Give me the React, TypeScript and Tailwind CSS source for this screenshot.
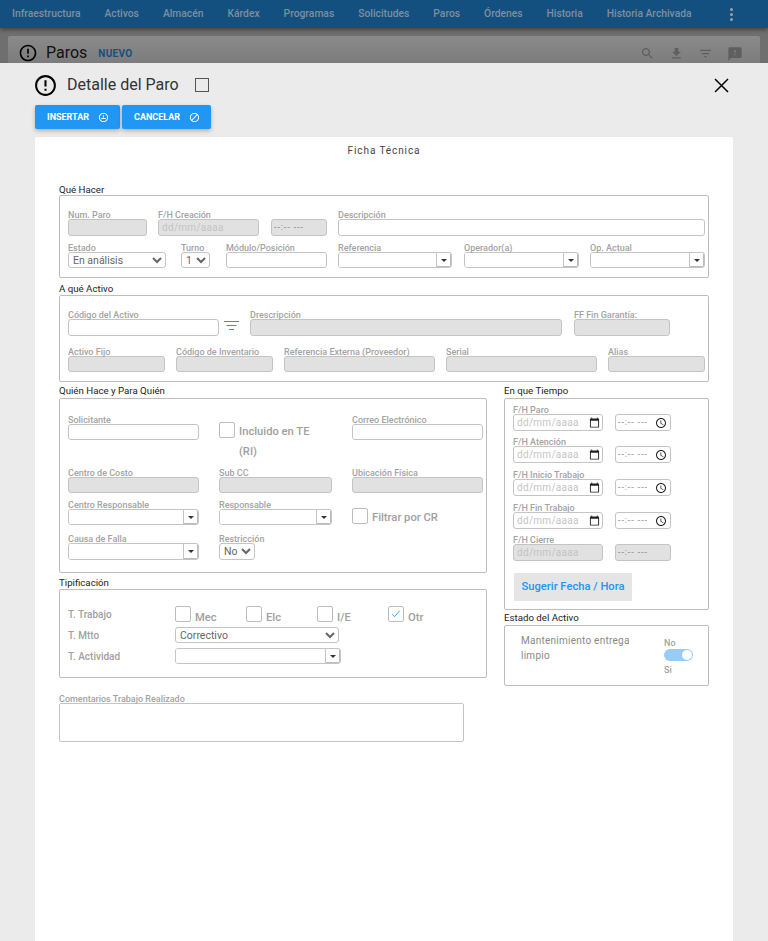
import type { ReactNode } from 'react';

const menu = ['Infraestructura', 'Activos', 'Almacén', 'Kárdex', 'Programas', 'Solicitudes', 'Paros', 'Órdenes', 'Historia', 'Historia Archivada'];

const ICONS = {
  error: 'M11 15h2v2h-2zm0-8h2v6h-2zm.99-5C6.47 2 2 6.48 2 12s4.47 10 9.99 10C17.52 22 22 17.52 22 12S17.52 2 11.99 2zM12 20c-4.42 0-8-3.58-8-8s3.58-8 8-8 8 3.58 8 8-3.58 8-8 8z',
  search: 'M15.5 14h-.79l-.28-.27C15.41 12.59 16 11.11 16 9.5 16 5.91 13.09 3 9.5 3S3 5.91 3 9.5 5.91 16 9.5 16c1.61 0 3.09-.59 4.23-1.57l.27.28v.79l5 4.99L20.49 19l-4.99-5zm-6 0C7.01 14 5 11.99 5 9.5S7.01 5 9.5 5 14 7.01 14 9.5 11.99 14 9.5 14z',
  download: 'M19 9h-4V3H9v6H5l7 7 7-7zM5 18v2h14v-2H5z',
  filter: 'M10 18h4v-2h-4v2zM3 6v2h18V6H3zm3 7h12v-2H6v2z',
  feedback: 'M20 2H4c-1.1 0-1.99.9-1.99 2L2 22l4-4h14c1.1 0 2-.9 2-2V4c0-1.1-.9-2-2-2zm-7 12h-2v-2h2v2zm0-4h-2V6h2v4z',
  block: 'M12 2C6.48 2 2 6.48 2 12s4.48 10 10 10 10-4.48 10-10S17.52 2 12 2zM4 12c0-4.42 3.58-8 8-8 1.85 0 3.55.63 4.9 1.69L5.69 16.9C4.63 15.55 4 13.85 4 12zm8 8c-1.85 0-3.55-.63-4.9-1.69L18.31 7.1C19.37 8.45 20 10.15 20 12c0 4.42-3.58 8-8 8z',
  insert: 'M12 2C6.48 2 2 6.48 2 12s4.48 10 10 10 10-4.48 10-10S17.52 2 12 2zm0 18c-4.42 0-8-3.58-8-8s3.58-8 8-8 8 3.58 8 8-3.58 8-8 8zM7 13h10v2H7zm4-6h2v5h-2z',
  clock: 'M11.99 2C6.47 2 2 6.48 2 12s4.47 10 9.99 10C17.52 22 22 17.52 22 12S17.52 2 11.99 2zM12 20c-4.42 0-8-3.58-8-8s3.58-8 8-8 8 3.58 8 8-3.58 8-8 8zm.5-13H11v6l5.25 3.15.75-1.23-4.5-2.67z',
  calendar: 'M20 3h-1V1h-2v2H7V1H5v2H4c-1.1 0-2 .9-2 2v16c0 1.1.9 2 2 2h16c1.1 0 2-.9 2-2V5c0-1.1-.9-2-2-2zm0 18H4V8h16v13z',
};

const Icon = ({ name, className }: { name: keyof typeof ICONS; className: string }) => (
  <svg viewBox="0 0 24 24" fill="currentColor" className={className}>
    <path d={ICONS[name]} />
  </svg>
);

const Label = ({ children, className = 'h-[9px]' }: { children: ReactNode; className?: string }) => (
  <div className={`${className} flex items-end whitespace-nowrap text-[9px] leading-[7px] font-medium text-[#a3a3a3]`}>{children}</div>
);

const inputBox = 'block w-full rounded-[3px] border border-[#c4c4c4] text-[#666]';

const Text = ({ label, className, off, h = 'h-[17px]', labelClass }: { label: string; className: string; off?: boolean; h?: string; labelClass?: string }) => (
  <div className={className}>
    <Label className={labelClass}>{label}</Label>
    <input disabled={off} className={`${inputBox} ${h} px-1 text-[11px] ${off ? 'bg-[#e1e1e1]' : 'bg-white'}`} />
  </div>
);

const Combo = ({ label, className, h = 'h-[17px]', labelClass }: { label?: string; className: string; h?: string; labelClass?: string }) => (
  <div className={className}>
    {label && <Label className={labelClass}>{label}</Label>}
    <div className={`flex overflow-hidden rounded-[3px] border border-[#c4c4c4] bg-white ${h}`}>
      <input className="min-w-0 flex-1 bg-white px-1 text-[11px]" />
      <span className="flex w-[15px] items-center justify-center border-l border-[#c4c4c4] shadow-[inset_-1px_-1px_0_#bbb]">
        <span className="h-0 w-0 border-x-[3px] border-t-[3px] border-x-transparent border-t-[#333]" />
      </span>
    </div>
  </div>
);

const Pick = ({ label, className, value, h = 'h-[17px]', labelClass }: { label?: string; className: string; value: string; h?: string; labelClass?: string }) => (
  <div className={className}>
    {label && <Label className={labelClass}>{label}</Label>}
    <select defaultValue={value} className={`${inputBox} ${h} bg-white text-[10.5px]`}>
      <option>{value}</option>
    </select>
  </div>
);

const Check = ({ checked, className = 'h-4 w-4' }: { checked?: boolean; className?: string }) => (
  <span className={`flex shrink-0 items-center justify-center rounded-[2px] border border-[#bdbdbd] bg-white ${className}`}>
    {checked && (
      <svg viewBox="0 0 16 16" className="h-3 w-3" fill="none" stroke="#2196f3" strokeWidth="1.2">
        <path d="M3 8.5l3.2 3L13 3.5" />
      </svg>
    )}
  </span>
);

const Section = ({ title, head, className, children }: { title: string; head: string; className: string; children: ReactNode }) => (
  <section>
    <div className={`${head} text-[9.7px] leading-[12px] text-[#222]`}>{title}</div>
    <div className={`rounded-[2px] border border-[#bdbdbd] ${className}`}>{children}</div>
  </section>
);

const DateText = () => <span className="text-[10px] tracking-[0.3px] text-[#c4c4c4]">dd/mm/aaaa</span>;
const TimeText = () => <span className="text-[9px] tracking-[0.9px] text-[#888]">--:-- ---</span>;

const DateTime = ({ label, rowClass, off }: { label: string; rowClass: string; off?: boolean }) => (
  <div className={rowClass}>
    <Label>{label}</Label>
    <div className="flex gap-3">
      <div className={`flex h-[17px] w-[90px] items-center justify-between rounded-[3px] border border-[#c4c4c4] pl-[3px] pr-[2px] ${off ? 'bg-[#e1e1e1]' : 'bg-white'}`}>
        <DateText />
        {!off && <Icon name="calendar" className="h-[11px] w-[11px] text-[#222]" />}
      </div>
      <div className={`flex h-[17px] w-[56px] items-center justify-between rounded-[3px] border border-[#c4c4c4] pl-[2px] pr-[3px] ${off ? 'bg-[#e1e1e1]' : 'bg-white'}`}>
        <TimeText />
        {!off && <Icon name="clock" className="h-[12px] w-[12px] text-[#222]" />}
      </div>
    </div>
  </div>
);

const checkText = 'text-[11.2px] font-medium text-[#a0a0a0]';

const Opt = ({ label, checked }: { label: string; checked?: boolean }) => (
  <div className="flex w-[71px] items-center gap-1">
    <Check checked={checked} />
    <span className={`pt-[7px] leading-[13px] ${checkText}`}>{label}</span>
  </div>
);

const SideLabel = ({ children }: { children: ReactNode }) => (
  <span className="w-[107px] shrink-0 text-[10px] font-medium text-[#a0a0a0]">{children}</span>
);

export default function App() {
  return (
    <div className="flex h-screen flex-col overflow-hidden font-[Roboto,sans-serif]">
      {/* dimmed page behind the dialog */}
      <div className="h-[63px] shrink-0 overflow-hidden bg-[#6f6f6f]">
        <nav className="flex h-[28px] items-center justify-between bg-[#14507f] pl-3 pr-[35px] shadow-[0_2px_4px_rgba(0,0,0,0.4)]">
          <div className="flex gap-6">
            {menu.map((m) => (
              <span key={m} className="text-[10.3px] font-medium whitespace-nowrap text-[#7d8f9e]">{m}</span>
            ))}
          </div>
          <div className="flex flex-col gap-[2px]">
            <span className="h-[3px] w-[3px] rounded-full bg-[#a0a0a0]" />
            <span className="h-[3px] w-[3px] rounded-full bg-[#a0a0a0]" />
            <span className="h-[3px] w-[3px] rounded-full bg-[#a0a0a0]" />
          </div>
        </nav>
        <div className="mx-2 mt-2 flex h-[40px] items-start rounded-t-[2px] bg-gradient-to-b from-[#8a8a8a] to-[#767676] pl-[10px] pr-[17px] pt-[7px]">
          <Icon name="error" className="h-[20px] w-[20px] text-black" />
          <span className="ml-2 pt-[1px] text-[16px] leading-[18px] text-[#111]">Paros</span>
          <span className="ml-[11px] pt-[5px] text-[10px] leading-[12px] font-bold tracking-[0.3px] text-[#14507f]">NUEVO</span>
          <div className="ml-auto flex gap-[14px] pt-[3px] text-[#5f5f5f]">
            <Icon name="search" className="h-[15px] w-[15px]" />
            <Icon name="download" className="h-[15px] w-[15px]" />
            <Icon name="filter" className="h-[15px] w-[15px]" />
            <Icon name="feedback" className="h-[16px] w-[16px]" />
          </div>
        </div>
      </div>

      {/* dialog */}
      <div className="flex min-h-0 flex-1 flex-col bg-[#ebebeb] px-[35px]">
        <div className="flex h-[42px] items-center pt-[2px]">
          <Icon name="error" className="ml-[-2px] h-[25px] w-[25px] text-black" />
          <span className="ml-[9px] text-[16px] text-[#333]">Detalle del Paro</span>
          <span className="ml-4 h-[14px] w-[14px] border border-[#555]" />
          <svg viewBox="0 0 15 15" className="ml-auto mr-1 h-[15px] w-[15px]" fill="none" stroke="#000" strokeWidth="1.5">
            <path d="M1 1l13 13M14 1L1 14" />
          </svg>
        </div>
        <div className="flex gap-[2px]">
          <button className="flex h-[24px] w-[85px] items-center justify-between rounded-[2px] bg-[#2196f3] pl-3 pr-[11px] pt-[1px] text-[9px] font-bold text-white shadow-[0_2px_4px_rgba(0,0,0,0.25)]">
            INSERTAR
            <Icon name="insert" className="h-[11px] w-[11px]" />
          </button>
          <button className="flex h-[24px] w-[89px] items-center justify-between rounded-[2px] bg-[#2196f3] pl-3 pr-[11px] pt-[1px] text-[9px] font-bold text-white shadow-[0_2px_4px_rgba(0,0,0,0.25)]">
            CANCELAR
            <Icon name="block" className="h-[11px] w-[11px]" />
          </button>
        </div>

        <div className="mt-2 flex-1 rounded-t-[2px] bg-white pl-[24px] pr-[24px] pt-[7px]">
          <h2 className="h-[14px] text-center text-[10px] leading-[14px] font-normal tracking-[0.9px] text-[#444]">Ficha Técnica</h2>

          <div className="mt-5">
            <Section title="Qué Hacer" head="h-[17px] pt-[6px]" className="h-[83px] pl-2 pr-[3px] pt-[14px]">
              <div className="flex">
                <Text label="Num. Paro" className="w-[79px]" off />
                <div className="ml-[11px] w-[101px]">
                  <Label>F/H Creación</Label>
                  <div className="flex h-[17px] items-center rounded-[3px] border border-[#c4c4c4] bg-[#e1e1e1] pl-[3px]">
                    <DateText />
                  </div>
                </div>
                <div className="ml-3 w-[56px]">
                  <Label>{'\u00a0'}</Label>
                  <div className="flex h-[17px] items-center rounded-[3px] border border-[#c4c4c4] bg-[#e1e1e1] pl-[2px]">
                    <TimeText />
                  </div>
                </div>
                <Text label="Descripción" className="ml-[11px] w-[367px]" />
              </div>
              <div className="mt-[7px] flex">
                <Pick label="Estado" value="En análisis" className="w-[98px]" h="h-4" />
                <Pick label="Turno" value="1" className="ml-[15px] w-[29px]" h="h-4" />
                <Text label="Módulo/Posición" className="ml-4 w-[101px]" h="h-4" />
                <Combo label="Referencia" className="ml-[11px] w-[114px]" h="h-4" />
                <Combo label="Operador(a)" className="ml-3 w-[115px]" h="h-4" />
                <Combo label="Op. Actual" className="ml-[11px] w-[115px]" h="h-4" />
              </div>
            </Section>

            <Section title="A qué Activo" head="h-[17px] pt-[5px]" className="h-[87px] pl-2 pr-[3px] pt-[14px]">
              <div className="flex">
                <Text label="Código del Activo" className="w-[151px]" />
                <div className="flex w-[31px] items-end pb-[5px] pl-[5px]">
                  <svg viewBox="0 0 15 10" className="h-[10px] w-[15px]" fill="none" stroke="#2196f3" strokeWidth="1">
                    <path d="M0 .5h15M2.5 4.5h10M5 8.5h5" />
                  </svg>
                </div>
                <Text label="Drescripción" className="w-[312px]" off />
                <Text label="FF Fin Garantía:" className="ml-3 w-[96px]" off />
              </div>
              <div className="mt-[11px] flex">
                <Text label="Activo Fijo" className="w-[97px]" off h="h-4" />
                <Text label="Código de Inventario" className="ml-[11px] w-[97px]" off h="h-4" />
                <Text label="Referencia Externa (Proveedor)" className="ml-[11px] w-[151px]" off h="h-4" />
                <Text label="Serial" className="ml-[11px] w-[151px]" off h="h-4" />
                <Text label="Alias" className="ml-[11px] w-[97px]" off h="h-4" />
              </div>
            </Section>
          </div>

          <div className="flex gap-[17px]">
            <div className="w-[428px]">
              <Section title="Quién Hace y Para Quién" head="h-4 pt-[3px]" className="h-[175px] pl-2 pt-[15px]">
                <div className="grid grid-cols-[131px_113px_131px] grid-rows-[53px_33px_34px_26px] gap-x-5">
                  <Text label="Solicitante" className="" labelClass="h-[10px]" h="h-4" />
                  <div className="flex gap-1 pt-2">
                    <Check />
                    <span className={`leading-[20px] ${checkText}`}>
                      Incluido en TE
                      <br />
                      (RI)
                    </span>
                  </div>
                  <Text label="Correo Electrónico" className="" labelClass="h-[10px]" h="h-4" />
                  <Text label="Centro de Costo" className="" labelClass="h-[10px]" h="h-4" off />
                  <Text label="Sub CC" className="" labelClass="h-[10px]" h="h-4" off />
                  <Text label="Ubicación Física" className="" labelClass="h-[10px]" h="h-4" off />
                  <Combo label="Centro Responsable" className="" h="h-4" />
                  <Combo label="Responsable" className="" h="h-4" />
                  <div className="flex gap-1 pt-2">
                    <Check />
                    <span className={`leading-[20px] ${checkText}`}>Filtrar por CR</span>
                  </div>
                  <Combo label="Causa de Falla" className="" />
                  <Pick label="Restricción" value="No" className="w-[36px]" />
                </div>
              </Section>

              <Section title="Tipificación" head="h-4 pt-[4px]" className="h-[89px] pl-2 pt-4">
                <div className="flex h-4 items-center">
                  <SideLabel>T. Trabajo</SideLabel>
                  <Opt label="Mec" />
                  <Opt label="Elc" />
                  <Opt label="I/E" />
                  <Opt label="Otr" checked />
                </div>
                <div className="mt-[5px] flex items-center">
                  <SideLabel>T. Mtto</SideLabel>
                  <Pick value="Correctivo" className="w-[164px]" h="h-4" />
                </div>
                <div className="mt-[5px] flex items-center">
                  <SideLabel>T. Actividad</SideLabel>
                  <Combo className="w-[166px]" h="h-4" />
                </div>
              </Section>

              <div className="mt-[15px] w-[405px]">
                <Label className="h-[10px]">Comentarios Trabajo Realizado</Label>
                <textarea className="block h-[39px] w-full resize-none rounded-[2px] border border-[#c4c4c4] bg-white" />
              </div>
            </div>

            <div className="w-[205px]">
              <Section title="En que Tiempo" head="h-4 pt-[3px]" className="h-[212px] pl-2 pt-[6px]">
                <DateTime label="F/H Paro" rowClass="h-[32px]" />
                <DateTime label="F/H Atención" rowClass="h-[33px]" />
                <DateTime label="F/H Inicio Trabajo" rowClass="h-[33px]" />
                <DateTime label="F/H Fin Trabajo" rowClass="h-[32px]" />
                <DateTime label="F/H Cierre" rowClass="h-[26px]" off />
                <button className="ml-[1px] mt-3 h-[28px] w-[118px] bg-[#e5e5e5] text-[11.2px] font-medium text-[#2196f3]">Sugerir Fecha / Hora</button>
              </Section>

              <Section title="Estado del Activo" head="h-[15px] pt-[2px]" className="flex h-[61px] pl-4 pt-[7px]">
                <p className="w-[143px] pr-5 text-[10px] leading-[15px] tracking-[0.25px] text-[#888]">Mantenimiento entrega limpio</p>
                <div className="mt-[5px] flex flex-col">
                  <span className="h-[10px] text-[9px] leading-[10px] font-medium text-[#a3a3a3]">No</span>
                  <span className="mt-[1px] flex h-3 w-[29px] items-center justify-end rounded-full bg-[#99ccf5] pr-[1px]">
                    <span className="h-[10px] w-[10px] rounded-full bg-white" />
                  </span>
                  <span className="mt-1 text-[9px] leading-[10px] font-medium text-[#a3a3a3]">Si</span>
                </div>
              </Section>
            </div>
          </div>
        </div>
      </div>
    </div>
  );
}
